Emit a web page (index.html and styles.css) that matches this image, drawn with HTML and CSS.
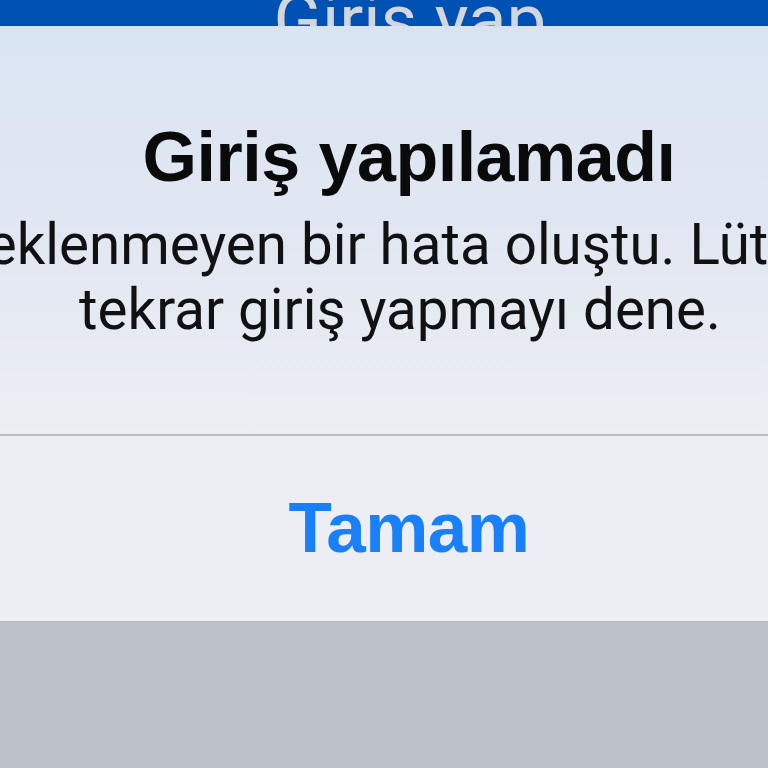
FILE: index.html
```html
<!DOCTYPE html>
<html lang="tr">
<head>
<meta charset="utf-8">
<link rel="stylesheet" href="styles.css">
</head>
<body>
<div class="screen">
  <div class="topbar"><span class="topbar-text">Giriş yap</span></div>
  <div class="alert">
    <div class="alert-content">
      <div class="title">Giriş yapılamadı</div>
      <div class="message">
        <div class="line line1">Beklenmeyen bir hata oluştu. Lütfen</div>
        <div class="line line2">tekrar giriş yapmayı dene.</div>
      </div>
    </div>
    <div class="separator"></div>
    <div class="actions">
      <div class="button">Tamam</div>
    </div>
  </div>
  <div class="backdrop"></div>
</div>
</body>
</html>
```

FILE: styles.css
```css
html, body {
  margin: 0;
  padding: 0;
  width: 768px;
  height: 768px;
  overflow: hidden;
}
body {
  font-family: "Liberation Sans", Arial, sans-serif;
  background: #bcc1c8;
}
.screen {
  display: flex;
  flex-direction: column;
  width: 768px;
  height: 768px;
  overflow: hidden;
}
.topbar {
  height: 26px;
  background: #0051b4;
  display: flex;
  justify-content: center;
  align-items: flex-end;
  overflow: hidden;
  padding-left: 52px;
  flex: none;
}
.topbar-text {
  font-family: "Roboto", "Liberation Sans", sans-serif;
  font-size: 71px;
  line-height: 40px;
  color: #d3d6dc;
  white-space: nowrap;
  position: relative;
  top: 14px;
}
.alert {
  background: linear-gradient(180deg, #d9e4f3 0%, #e3e8f2 40%, #eceef3 70%, #eceef3 100%);
  display: flex;
  flex-direction: column;
  flex: none;
  height: 595px;
}
.alert-content {
  display: flex;
  flex-direction: column;
  align-items: center;
  padding-top: 91px;
  height: 317px;
}
.title {
  font-size: 70px;
  font-weight: bold;
  line-height: 80px;
  color: #0a0a0a;
  padding-left: 50px;
  white-space: nowrap;
  letter-spacing: -0.5px;
}
.message {
  display: flex;
  flex-direction: column;
  align-items: center;
  width: 768px;
  overflow: hidden;
  padding-top: 16px;
}
.line {
  display: flex;
  justify-content: center;
  width: 736px;
  padding-left: 32px;
  white-space: nowrap;
  font-family: "Roboto", "Liberation Sans", sans-serif;
  font-size: 56.5px;
  line-height: 65px;
  color: #111;
}
.separator {
  height: 2px;
  background: #bbbdc2;
  flex: none;
}
.actions {
  flex: 1;
  display: flex;
  justify-content: center;
  align-items: center;
  padding-bottom: 2px;
}
.button {
  font-size: 71px;
  font-weight: bold;
  color: #1a80fa;
  padding-left: 50px;
  letter-spacing: -0.5px;
}
.backdrop {
  flex: 1;
  background: #bcc1c8;
  border-top: 1px solid #b4b8bf;
}
```
